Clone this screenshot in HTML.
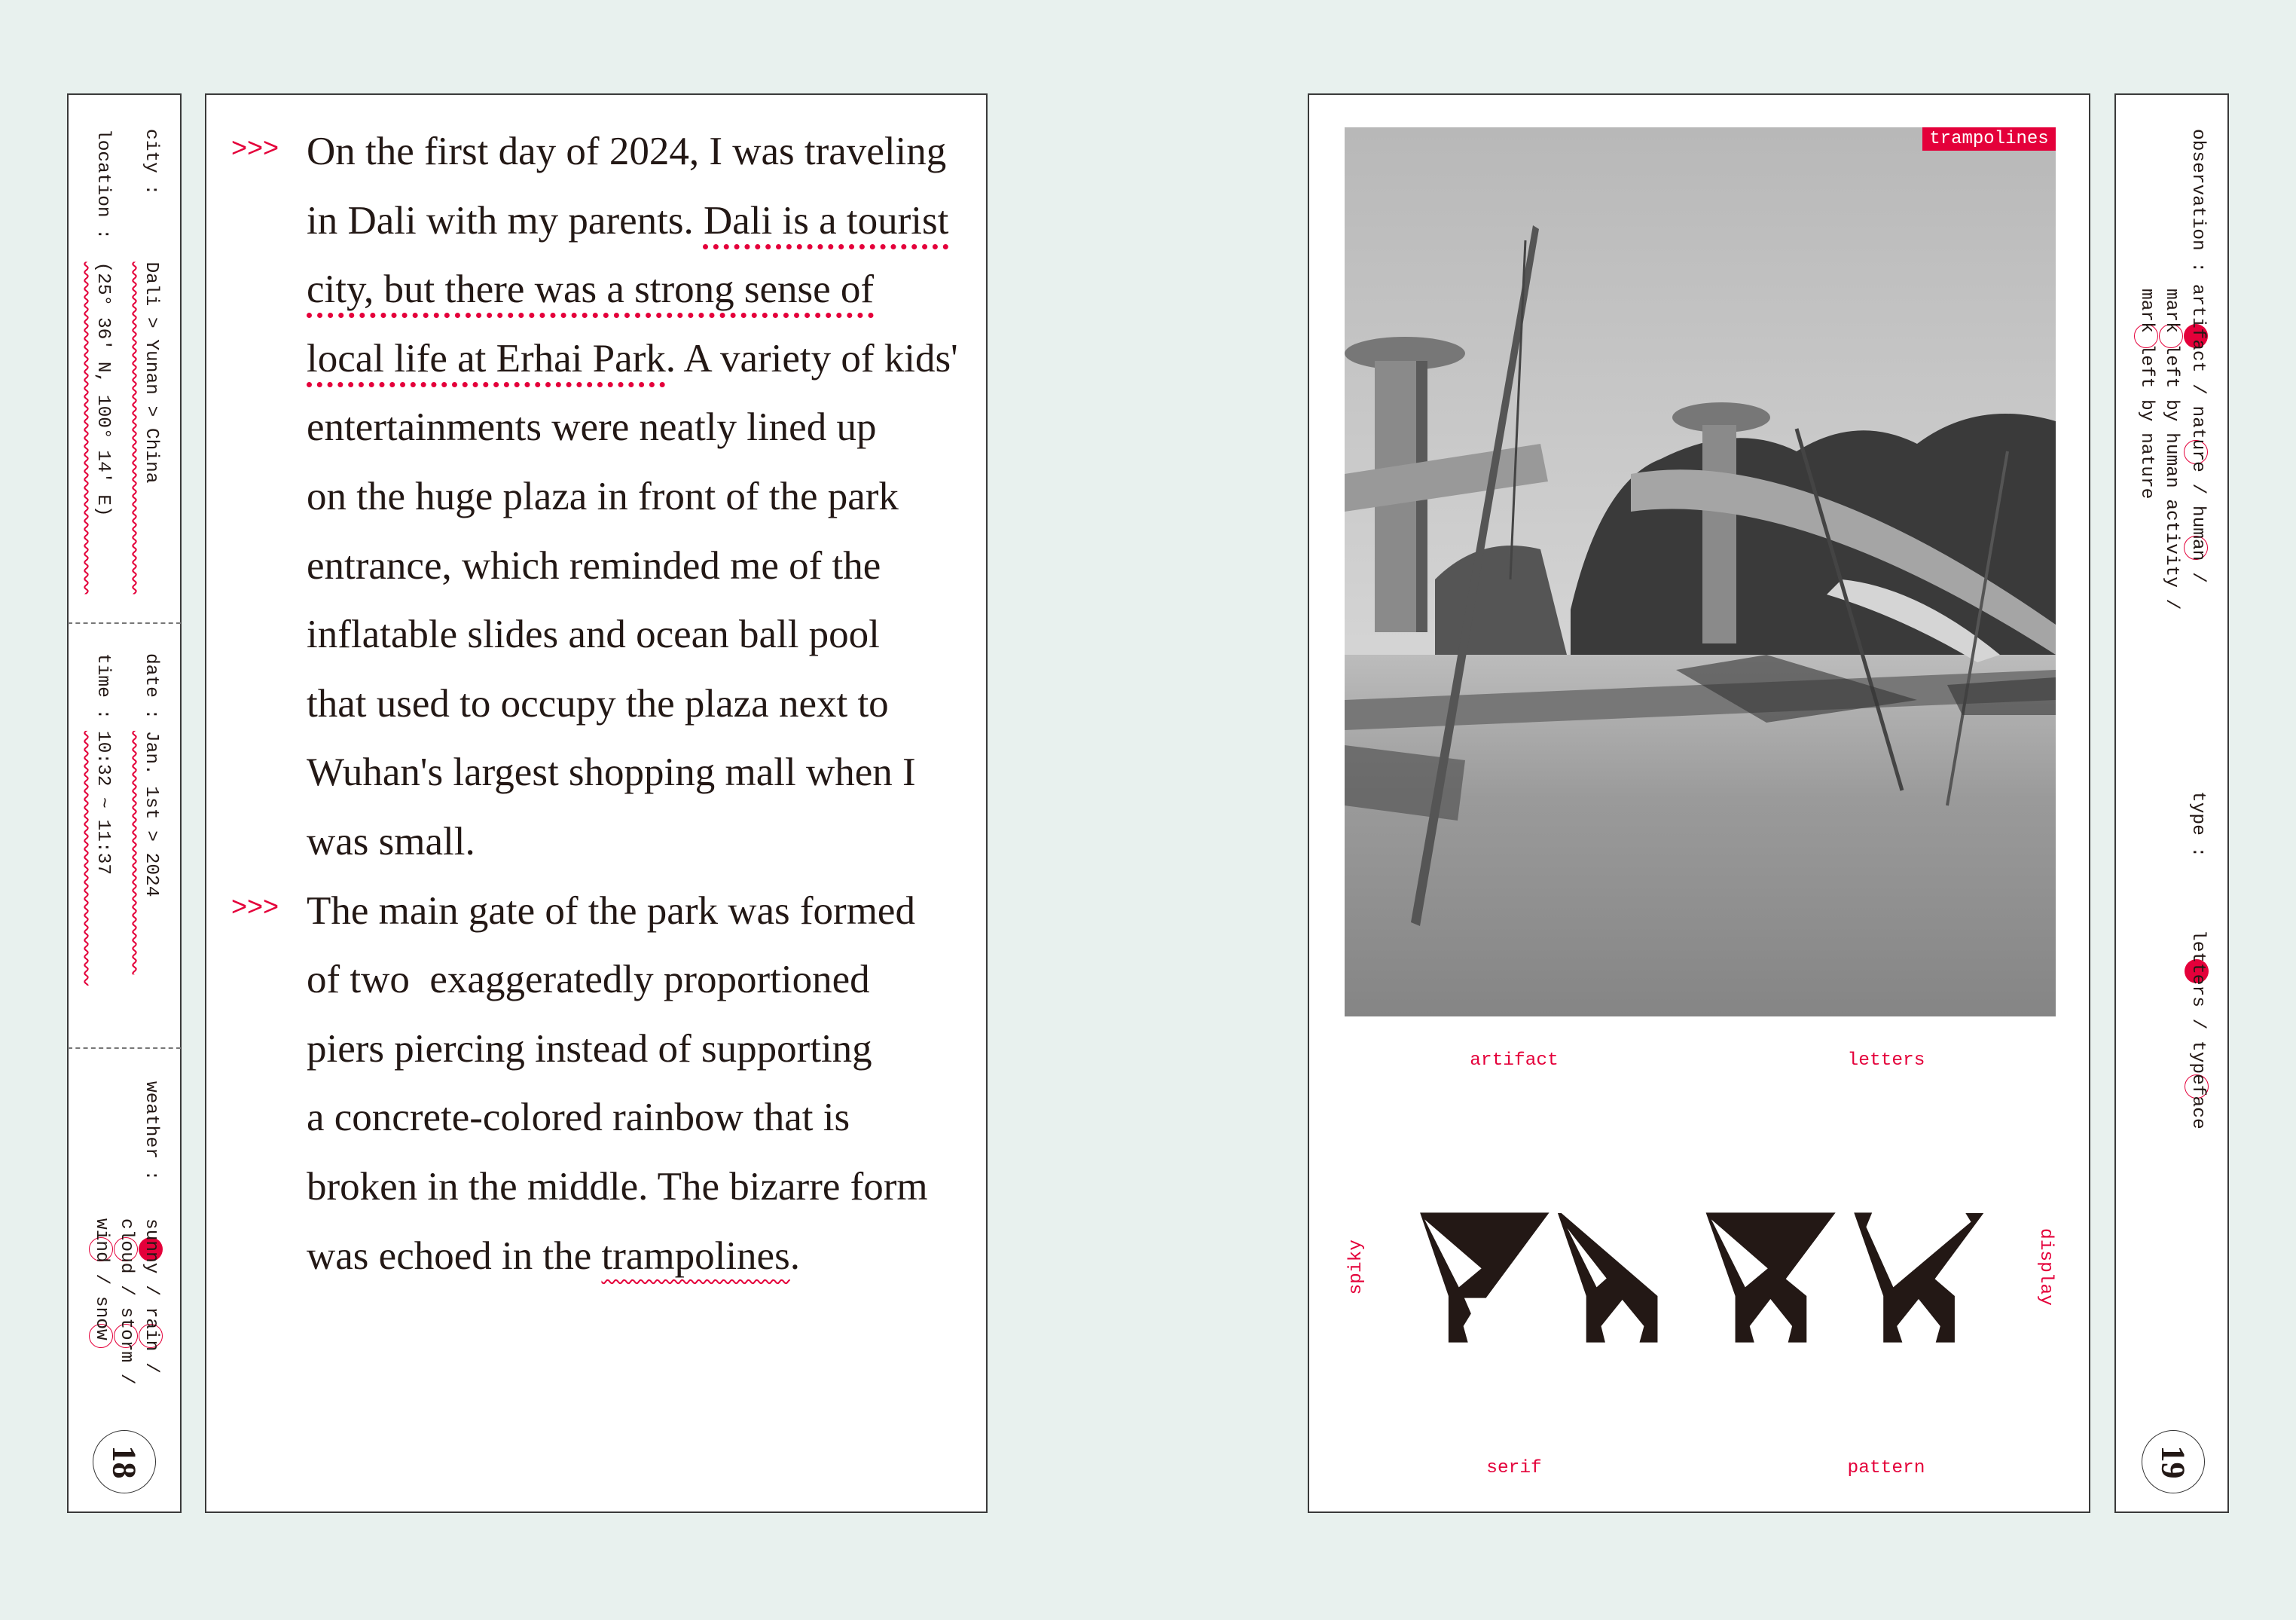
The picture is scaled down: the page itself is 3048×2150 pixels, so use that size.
<!DOCTYPE html>
<html><head><meta charset="utf-8"><style>
*{margin:0;padding:0;box-sizing:border-box}
body{width:3048px;height:2150px;background:#e8f1ee;position:relative;overflow:hidden;font-family:"Liberation Serif",serif;color:#231815}
.panel{position:absolute;background:#fff;border:2px solid #3a3a3a}
.v{position:absolute;writing-mode:vertical-rl;font-family:"Liberation Mono",monospace;font-size:24.5px;line-height:30px;white-space:pre;color:#231815}
.w{text-decoration:underline wavy #e4003a 1.5px;text-underline-position:left;text-underline-offset:6px}
.dash{position:absolute;border-top:2px dashed #777;height:0}
.c{position:absolute;width:32px;height:32px;border-radius:50%;border:1.5px solid #e4003a}
.f{background:#e4003a;border:none}
.txt{position:absolute;left:407px;top:156px;font-size:53px;line-height:91.6px;white-space:nowrap}
.mk{position:absolute;left:307px;color:#e4003a;font-family:"Liberation Sans",sans-serif;font-size:36px}
.d{text-decoration:underline dotted #e4003a 7px;text-underline-offset:14px}
.z{text-decoration:underline wavy #e4003a 2px;text-underline-offset:14px}
.lab{position:absolute;color:#e4003a;font-family:"Liberation Mono",monospace;font-size:24.5px;transform:translateX(-50%)}
.pn{position:absolute;width:84px;height:84px;border-radius:50%;border:1.5px solid #333;display:flex;align-items:center;justify-content:center}
.pn span{transform:rotate(90deg);font-family:"Liberation Serif",serif;font-weight:bold;font-size:44px;color:#231815}
</style></head><body>

<div class="panel" style="left:89px;top:124px;width:152px;height:1884px"></div>
<div class="dash" style="left:90px;top:826px;width:150px"></div>
<div class="dash" style="left:90px;top:1390px;width:150px"></div>
<div class="v" style="left:185px;top:171px">city :      <span class="w">Dali &gt; Yunan &gt; China          </span></div>
<div class="v" style="left:121px;top:171px">location :  <span class="w">(25° 36' N, 100° 14' E)       </span></div>
<div class="v" style="left:185px;top:867px">date : <span class="w">Jan. 1st &gt; 2024       </span></div>
<div class="v" style="left:121px;top:867px">time : <span class="w">10:32 ~ 11:37          </span></div>
<div class="c f" style="left:184px;top:1642px"></div>
<div class="c" style="left:184px;top:1757px"></div>
<div class="c" style="left:151px;top:1642px"></div>
<div class="c" style="left:151px;top:1757px"></div>
<div class="c" style="left:118px;top:1642px"></div>
<div class="c" style="left:118px;top:1757px"></div>
<div class="v" style="left:185px;top:1435px">weather :</div>
<div class="v" style="left:185px;top:1617px">sunny / rain /</div>
<div class="v" style="left:152px;top:1617px">cloud / storm /</div>
<div class="v" style="left:119px;top:1617px">wind / snow</div>
<div class="pn" style="left:123px;top:1898px"><span>18</span></div>

<div class="panel" style="left:272px;top:124px;width:1039px;height:1884px"></div>
<div class="mk" style="top:175px">&gt;&gt;&gt;</div>
<div class="mk" style="top:1182px">&gt;&gt;&gt;</div>
<div class="txt">
On the first day of 2024, I was traveling<br>
in Dali with my parents. <span class="d">Dali is a tourist</span><br>
<span class="d">city, but there was a strong sense of</span><br>
<span class="d">local life at Erhai Park</span>. A variety of kids'<br>
entertainments were neatly lined up<br>
on the huge plaza in front of the park<br>
entrance, which reminded me of the<br>
inflatable slides and ocean ball pool<br>
that used to occupy the plaza next to<br>
Wuhan's largest shopping mall when I<br>
was small.<br>
The main gate of the park was formed<br>
of two&nbsp; exaggeratedly proportioned<br>
piers piercing instead of supporting<br>
a concrete-colored rainbow that is<br>
broken in the middle. The bizarre form<br>
was echoed in the <span class="z">trampolines</span>.
</div>

<div class="panel" style="left:1736px;top:124px;width:1039px;height:1884px"></div>
<svg style="position:absolute;left:1785px;top:169px" width="944" height="1180" viewBox="0 0 944 1180">
<defs>
<linearGradient id="sky" x1="0" y1="0" x2="0" y2="1"><stop offset="0" stop-color="#b8b8b8"/><stop offset="1" stop-color="#e8e8e8"/></linearGradient>
<linearGradient id="gr" x1="0" y1="0" x2="0" y2="1"><stop offset="0" stop-color="#bcbcbc"/><stop offset="0.4" stop-color="#9a9a9a"/><stop offset="1" stop-color="#858585"/></linearGradient>
</defs>
<rect width="944" height="1180" fill="url(#sky)"/>
<path d="M300 640 Q340 470 420 440 Q520 390 600 430 Q680 380 760 420 Q840 360 944 390 L944 720 L300 720Z" fill="#3a3a3a"/>
<path d="M120 600 Q180 540 260 560 L300 720 L120 720Z" fill="#555"/>
<rect x="0" y="700" width="944" height="480" fill="url(#gr)"/>
<path d="M0 760 L944 720 L944 760 L0 800Z" fill="#777"/>
<ellipse cx="80" cy="300" rx="80" ry="22" fill="#777"/>
<rect x="40" y="310" width="60" height="360" fill="#8a8a8a"/>
<rect x="95" y="310" width="15" height="360" fill="#5a5a5a"/>
<path d="M0 460 L260 420 L270 470 L0 510Z" fill="#999"/>
<ellipse cx="500" cy="385" rx="65" ry="20" fill="#777"/>
<rect x="475" y="395" width="45" height="290" fill="#8a8a8a"/>
<path d="M380 460 Q600 420 944 660 L944 700 Q600 480 380 510Z" fill="#a5a5a5"/>
<path d="M660 600 Q760 610 870 700 L840 710 Q740 650 640 620Z" fill="#d5d5d5"/>
<path d="M250 130 L258 135 L100 1060 L88 1055Z" fill="#555"/>
<path d="M220 600 L240 150" stroke="#444" stroke-width="3"/>
<path d="M600 400 L740 880" stroke="#444" stroke-width="5"/>
<path d="M880 430 L800 900" stroke="#555" stroke-width="4"/>
<path d="M440 720 L560 700 L760 760 L560 790Z" fill="#333" opacity=".6"/>
<path d="M800 740 L944 730 L944 780 L820 780Z" fill="#333" opacity=".6"/>
<path d="M0 820 L160 840 L150 920 L0 900Z" fill="#555" opacity=".7"/>
</svg>
<div style="position:absolute;left:2552px;top:169px;width:177px;height:31px;background:#e4003a;color:#fff;font-family:'Liberation Mono',monospace;font-size:24px;line-height:31px;text-align:center">trampolines</div>
<div class="lab" style="left:2010px;top:1394px">artifact</div>
<div class="lab" style="left:2504px;top:1394px">letters</div>
<div class="lab" style="left:2010px;top:1935px">serif</div>
<div class="lab" style="left:2504px;top:1935px">pattern</div>
<div class="v" style="left:1786px;top:1645px;color:#e4003a;transform:rotate(180deg)">spiky</div>
<div class="v" style="left:2700px;top:1630px;color:#e4003a">display</div>
<svg style="position:absolute;left:1800px;top:1560px" width="940" height="260" viewBox="0 0 1568 780" preserveAspectRatio="none">
<g fill="#231815" fill-rule="evenodd">
<path d="M142 148 L428 148 L288 488 L240 488 L255 550 L238 600 L248 665 L205 665 L205 480 Z M152 175 L278 370 L228 445 Z"/>
<path d="M447 150 L455 150 L668 480 L668 665 L628 665 L638 600 L590 495 L543 600 L552 665 L510 665 L510 480 Z M468 210 L555 410 L533 445 Z"/>
<path d="M775 148 L1062 148 L952 412 L998 480 L998 665 L957 665 L966 600 L918 492 L872 600 L882 665 L840 665 L840 480 Z M787 175 L912 370 L862 445 Z"/>
<path d="M1103 148 L1143 148 L1130 205 L1190 445 L1362 185 L1350 150 L1390 150 L1282 412 L1326 480 L1326 665 L1284 665 L1294 600 L1246 492 L1198 600 L1210 665 L1168 665 L1168 480 Z"/>
</g></svg>

<div class="panel" style="left:2807px;top:124px;width:152px;height:1884px"></div>
<div class="c f" style="left:2899px;top:430px"></div>
<div class="c" style="left:2899px;top:584px"></div>
<div class="c" style="left:2899px;top:711px"></div>
<div class="c" style="left:2866px;top:430px"></div>
<div class="c" style="left:2833px;top:430px"></div>
<div class="c f" style="left:2900px;top:1273px"></div>
<div class="c" style="left:2900px;top:1426px"></div>
<div class="v" style="left:2902px;top:171px">observation : artifact / nature / human /</div>
<div class="v" style="left:2867px;top:383px">mark left by human activity /</div>
<div class="v" style="left:2834px;top:383px">mark left by nature</div>
<div class="v" style="left:2902px;top:1050px">type :</div>
<div class="v" style="left:2902px;top:1234px">letters / typeface</div>
<div class="pn" style="left:2843px;top:1898px"><span>19</span></div>
</body></html>
